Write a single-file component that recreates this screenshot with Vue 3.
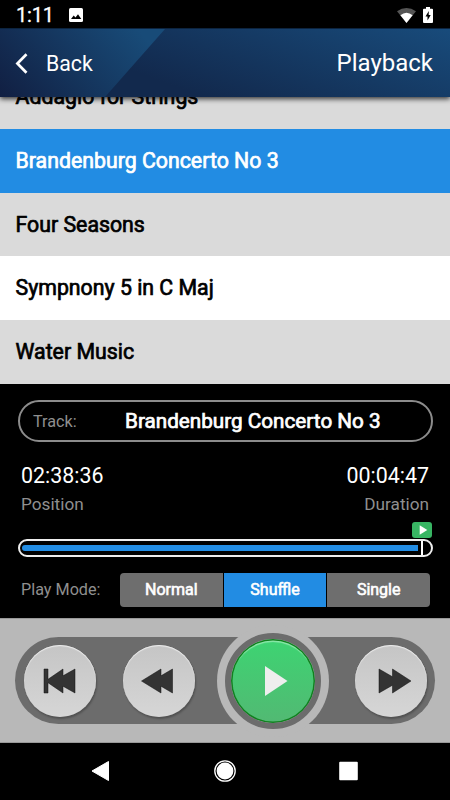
<template>
	<div class="screen">
		<div class="status">
			<span class="status__time">1:11</span>
			<svg class="status__image" viewBox="0 0 14 14">
				<rect width="14" height="14" rx="1.5" fill="#fff" />
				<path d="M2 11 4.7 7.4 6.5 9.6 9 6.3 12.3 11z" fill="#000" />
			</svg>
			<svg class="status__wifi" viewBox="0 0 19 15">
				<path d="M0 3.2Q9.5-3.2 19 3.2L9.5 15z" fill="#555" />
				<path d="M3.4 7.2Q9.5 2.2 15.6 7.2L9.5 15z" fill="#fff" />
			</svg>
			<svg class="status__battery" viewBox="0 0 10 16">
				<path d="M3 0h4v1.8h2q1 0 1 1V15q0 1-1 1H1q-1 0-1-1V2.8q0-1 1-1h2z" fill="#fff" />
				<path d="M5.8 4 2.5 9.6h2v4L7.7 8h-2z" fill="#000" />
			</svg>
		</div>

		<header class="header">
			<button class="header__back">
				<svg class="header__chevron" viewBox="0 0 13 21">
					<path d="M11.5 1.2 2.4 10.5l9.1 9.3" fill="none" stroke="#fff" stroke-width="2.7" />
				</svg>
				<span>Back</span>
			</button>
			<span class="header__title">Playback</span>
		</header>

		<ul class="tracks">
			<li
				v-for="track in tracks"
				:key="track"
				class="tracks__item"
				:class="{ 'tracks__item--active': track === current }"
				@click="current = track">
				{{ track }}
			</li>
		</ul>

		<section class="player">
			<div class="player__track">
				<span class="player__label">Track:</span>
				<span class="player__name">{{ current }}</span>
			</div>
			<div class="player__times">
				<div class="player__time">
					<span>02:38:36</span>
					<span class="player__label player__label--large">Position</span>
				</div>
				<div class="player__time player__time--end">
					<span>00:04:47</span>
					<span class="player__label player__label--large">Duration</span>
				</div>
			</div>
			<div class="progress">
				<div class="progress__flag">
					<svg viewBox="0 0 20 16">
						<path d="M7.7 3.2 15.3 8l-7.6 4.8z" fill="#fff" />
					</svg>
				</div>
				<div class="progress__bar">
					<div class="progress__fill" :style="{ width: progress + '%' }"></div>
					<div class="progress__mark"></div>
				</div>
			</div>
			<div class="modes">
				<span class="player__label">Play Mode:</span>
				<div class="modes__group">
					<button
						v-for="item in modes"
						:key="item"
						class="modes__btn"
						:class="{ 'modes__btn--active': item === mode }"
						@click="mode = item">
						{{ item }}
					</button>
				</div>
			</div>
		</section>

		<section class="transport">
			<div class="transport__tray">
				<button class="transport__btn">
					<svg viewBox="0 0 72 72">
						<path d="M20 24h4v10.3L39 24v6.8L51 24v24l-12-6.8V48L24 37.7V48h-4z" />
					</svg>
				</button>
				<button class="transport__btn transport__btn--rewind">
					<svg viewBox="0 0 72 72">
						<path d="M18.5 36 38 24v6.8L49.5 24v24L38 41.2V48z" />
					</svg>
				</button>
				<div class="transport__ring">
					<button class="transport__play">
						<svg viewBox="0 0 84 84">
							<path d="M34 27 56.5 42 34 57z" fill="#eee" />
						</svg>
					</button>
				</div>
				<button class="transport__btn transport__btn--forward">
					<svg viewBox="0 0 72 72">
						<path d="M24 24 37.5 31.8V24L56 36 37.5 48v-7.8L24 48z" />
					</svg>
				</button>
			</div>
		</section>

		<nav class="nav">
			<svg viewBox="0 0 22 22">
				<path d="M2 11 18.5 1.5v19z" fill="#fff" stroke="#fff" stroke-width="1" stroke-linejoin="round" />
			</svg>
			<svg viewBox="0 0 22 22">
				<circle cx="11" cy="11" r="10.2" fill="none" stroke="#fff" stroke-width="1.3" />
				<circle cx="11" cy="11" r="8.4" fill="#fff" />
			</svg>
			<svg viewBox="0 0 22 22">
				<rect x="2.2" y="1.7" width="18.6" height="18.6" rx="1" fill="#fff" />
			</svg>
		</nav>
	</div>
</template>

<script setup>
import { ref } from "vue";

const tracks = [
	"Addagio for Strings",
	"Brandenburg Concerto No 3",
	"Four Seasons",
	"Sympnony 5 in C Maj",
	"Water Music",
];
const modes = ["Normal", "Shuffle", "Single"];

const current = ref("Brandenburg Concerto No 3");
const mode = ref("Shuffle");
const progress = ref(98.8);
</script>

<style>
body {
	margin: 0;
	background-color: #000000;
}
</style>

<style scoped>
.screen {
	width: 450px;
	height: 800px;
	display: flex;
	flex-direction: column;
	overflow: hidden;
	background-color: #000000;
	color: #ffffff;
	font-family: Roboto, sans-serif;
}

.screen * {
	box-sizing: border-box;
}

button {
	padding: 0;
	border: none;
	background: none;
	color: inherit;
	font: inherit;
}

svg {
	display: block;
}

.status {
	flex: none;
	height: 28px;
	display: flex;
	align-items: center;
	padding: 2px 17px 0 16px;
}

.status__time {
	width: 37px;
	font-size: 20px;
	letter-spacing: -0.2px;
	line-height: 26px;
	-webkit-text-stroke: 0.3px currentColor;
}

.status__image {
	width: 14px;
	height: 14px;
	margin-left: 16px;
}

.status__wifi {
	width: 19px;
	height: 15px;
	margin-left: auto;
}

.status__battery {
	width: 10px;
	height: 16px;
	margin-left: 7px;
}

.header {
	position: relative;
	flex: none;
	z-index: 1;
	height: 69px;
	display: flex;
	align-items: center;
	justify-content: space-between;
	padding: 0 17px 0 15px;
	border-top: 1px solid #0c2440;
	background: linear-gradient(20deg, #12294d 32%, #184b7b 100%);
	box-shadow: 0 2px 5px rgba(0, 0, 0, 0.75);
}

/* lighter wedge behind the back button */
.header::before {
	content: "";
	position: absolute;
	z-index: -1;
	top: 0;
	left: 0;
	width: 165px;
	height: 68px;
	background: linear-gradient(48deg, #111f42 0%, #184b78 88%);
	clip-path: polygon(0 0, 100% 0, 105px 100%, 0 100%);
}

.header__back {
	display: flex;
	align-items: center;
	gap: 18px;
	font-size: 21.3px;
}

.header__chevron {
	width: 13px;
	height: 21px;
}

.header__title {
	font-size: 24px;
}

.tracks {
	flex: none;
	height: 287px;
	margin: 0;
	padding: 0;
	list-style: none;
	display: flex;
	flex-direction: column;
	justify-content: flex-end;
	overflow: hidden;
	background-color: #dadada;
	color: #000000;
}

.tracks__item {
	flex: none;
	height: 63.8px;
	padding-left: 15.5px;
	font-size: 21.3px;
	line-height: 63px;
	-webkit-text-stroke: 0.7px currentColor;
	background-color: #dadada;
}

.tracks__item:nth-child(4) {
	background-color: #ffffff;
}

.tracks__item.tracks__item--active {
	background-color: #228ce3;
	color: #ffffff;
}

.player {
	flex: none;
	height: 234px;
	padding: 16px 17px 0 18px;
}

.player__label {
	color: #8f8f8f;
	font-size: 16.2px;
}

.player__label--large {
	font-size: 17.2px;
}

.player__track {
	height: 42px;
	display: flex;
	align-items: center;
	padding: 0 13px;
	border: 2px solid #8c8c8c;
	border-radius: 21px;
}

.player__name {
	flex: 1;
	padding-left: 11px;
	text-align: center;
	font-size: 20.7px;
	-webkit-text-stroke: 0.7px currentColor;
}

.player__times {
	display: flex;
	justify-content: space-between;
	margin-top: 19px;
	padding: 0 4px 0 3px;
}

.player__time {
	display: flex;
	flex-direction: column;
	font-size: 21.4px;
	line-height: 29px;
}

.player__time--end {
	align-items: flex-end;
}

.progress {
	margin-top: 3px;
}

.progress__flag {
	width: 20px;
	height: 16px;
	margin-left: auto;
	margin-right: 1px;
	border-radius: 3px;
	background-color: #38b563;
}

.progress__bar {
	height: 18px;
	display: flex;
	align-items: center;
	margin-top: 1px;
	padding: 0 8px 0 2px;
	border: 2px solid #eeeeee;
	border-radius: 9px;
}

.progress__fill {
	height: 6px;
	border-radius: 3px 0 0 3px;
	background-color: #228ce3;
}

.progress__mark {
	width: 2px;
	height: 14px;
	margin-left: auto;
	flex: none;
	background-color: #ffffff;
}

.modes {
	display: flex;
	align-items: center;
	justify-content: space-between;
	margin-top: 16px;
	padding: 0 3px;
}

.modes .player__label {
	padding-bottom: 2px;
}

.modes__group {
	width: 310px;
	height: 34px;
	display: flex;
	gap: 1px;
	border-radius: 4px;
	overflow: hidden;
}

.modes__btn {
	flex: 1;
	padding-bottom: 2px;
	background-color: #6e6e6e;
	font-size: 16px;
	-webkit-text-stroke: 0.6px currentColor;
}

.modes__btn--active {
	background-color: #228ce3;
}

.transport {
	flex: none;
	height: 125px;
	padding: 18px 15px 0;
	border-top: 1px solid #999999;
	border-bottom: 1px solid #999999;
	background-color: #b8b8b8;
}

.transport__tray {
	height: 87px;
	display: flex;
	align-items: center;
	padding: 0 8.5px 0 9px;
	border-radius: 44px;
	background-color: #6c6c6c;
}

.transport__btn {
	flex: none;
	width: 72px;
	height: 72px;
	border-radius: 50%;
	background: linear-gradient(#c5c5c5, #d6d6d6);
	box-shadow: inset 0 1px 1px #eeeeee, 1px 2px 2px rgba(0, 0, 0, 0.25);
}

.transport__btn path {
	fill: #333333;
	stroke: #111111;
	stroke-width: 0.5;
}

.transport__btn--rewind {
	margin-left: 27px;
}

.transport__btn--forward {
	margin-left: auto;
}

.transport__ring {
	flex: none;
	width: 112px;
	height: 112px;
	margin: -13px 0 -13px 22.4px;
	padding: 8px;
	border-radius: 50%;
	background-color: #b8b8b8;
}

.transport__play {
	width: 96px;
	height: 96px;
	border: 6px solid #6c6c6c;
	border-radius: 50%;
	background: linear-gradient(#3dd472, #52b973) padding-box #6c6c6c;
	box-shadow: inset 0 0 0 1.5px #11801f, inset 0 3px 1px #8ce8aa;
}

.nav {
	flex: 1;
	display: flex;
	align-items: center;
	justify-content: space-between;
	padding: 0 91px 1px 90px;
}

.nav svg {
	width: 22px;
	height: 22px;
}
</style>
